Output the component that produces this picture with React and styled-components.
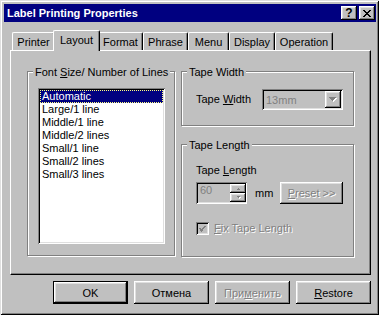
import React from 'react';
import styled, { createGlobalStyle } from 'styled-components';

const GlobalStyle = createGlobalStyle`
    html, body {
        margin: 0;
        padding: 0;
        background: #c0c0c0;
    }
    body {
        font-family: "Liberation Sans", Arial, sans-serif;
        font-size: 11px;
        color: #000;
    }
    * {
        box-sizing: border-box;
    }
`;

const raised = `
    box-shadow: inset -1px -1px #000, inset 1px 1px #fff,
        inset -2px -2px #808080, inset 2px 2px #dfdfdf;
`;

const sunken = `
    box-shadow: inset 1px 1px #808080, inset -1px -1px #fff,
        inset 2px 2px #000, inset -2px -2px #dfdfdf;
`;

const Window = styled.div`
    width: 379px;
    height: 315px;
    display: flex;
    flex-direction: column;
    padding: 4px 3px 3px 4px;
    background: #c0c0c0;
    box-shadow: inset 1px 1px #dfdfdf, inset -1px -1px #000,
        inset 2px 2px #fff, inset -2px -2px #808080;
`;

const TitleBar = styled.div`
    height: 18px;
    display: flex;
    align-items: center;
    padding: 0 1px 0 3px;
    background: #000080;
    color: #fff;
    font-weight: bold;
    font-size: 11px;
`;

const Title = styled.span`
    flex: 1;
`;

const CaptionButton = styled.div`
    width: 16px;
    height: 14px;
    margin-left: ${p => p.$gap || 0}px;
    display: flex;
    align-items: center;
    justify-content: center;
    background: #c0c0c0;
    color: #000;
    font-size: 12px;
    font-weight: bold;
    line-height: 14px;
    ${raised}
`;

const Body = styled.div`
    flex: 1;
    display: flex;
    flex-direction: column;
    padding: 8px 5px 0 6px;
`;

const TabStrip = styled.div`
    height: 20px;
    display: flex;
    align-items: flex-end;
    padding-left: 2px;
`;

const Tab = styled.div`
    position: relative;
    z-index: ${p => (p.$active ? 1 : 0)};
    flex-shrink: 0;
    width: ${p => p.$w + (p.$active ? 4 : 0)}px;
    height: ${p => (p.$active ? 21 : 18)}px;
    margin: ${p => (p.$active ? '0 -2px -1px' : '0')};
    padding-bottom: ${p => (p.$active ? 2 : 0)}px;
    display: flex;
    align-items: center;
    justify-content: center;
    background: #c0c0c0;
    border-top: 1px solid #fff;
    border-left: 1px solid #fff;
    border-right: 1px solid #000;
    border-radius: 2px 2px 0 0;
    box-shadow: inset -1px 0 #808080;
`;

const Panel = styled.div`
    height: 225px;
    display: flex;
    align-items: flex-start;
    gap: 6px;
    padding: 20px 0 0 16px;
    border-top: 1px solid #fff;
    border-left: 1px solid #fff;
    border-right: 1px solid #000;
    border-bottom: 1px solid #000;
    box-shadow: inset -1px -1px #808080;
`;

const Column = styled.div`
    display: flex;
    flex-direction: column;
    gap: 18px;
`;

const Group = styled.div`
    position: relative;
    flex-shrink: 0;
    width: ${p => p.$w}px;
    height: ${p => p.$h}px;
    padding: ${p => p.$pad};
    border: 1px solid #808080;
    box-shadow: inset 1px 1px #fff, 1px 1px #fff;
`;

const Legend = styled.span`
    position: absolute;
    top: -6px;
    left: 5px;
    padding: 0 2px;
    line-height: 13px;
    background: #c0c0c0;
    white-space: nowrap;
`;

const Key = styled.u`
    text-underline-offset: 1px;
`;

const ListBox = styled.div`
    width: 127px;
    height: 156px;
    padding: 2px;
    background: #fff;
    ${sunken}
`;

const ListItem = styled.div`
    height: 13px;
    line-height: 13px;
    padding-left: 2px;
    white-space: nowrap;
    background: ${p => (p.$selected ? '#000080' : 'transparent')};
    color: ${p => (p.$selected ? '#fff' : '#000')};
    outline: ${p => (p.$selected ? '1px dotted #ffff80' : 'none')};
    outline-offset: -1px;
`;

const Row = styled.div`
    display: flex;
    align-items: center;
    margin-top: ${p => p.$mt || 0}px;
`;

const Label = styled.span`
    width: ${p => (p.$w ? `${p.$w}px` : 'auto')};
    margin-left: ${p => p.$ml || 0}px;
    line-height: 13px;
    white-space: nowrap;
    color: ${p => (p.$disabled ? '#808080' : '#000')};
    text-shadow: ${p => (p.$disabled ? '1px 1px 0 #fff' : 'none')};
`;

const Combo = styled.div`
    width: 81px;
    height: 21px;
    display: flex;
    align-items: center;
    padding: 2px;
    background: #c0c0c0;
    ${sunken}
`;

const FieldText = styled.span`
    flex: 1;
    padding-left: 2px;
    color: #808080;
`;

const ArrowButton = styled.div`
    width: 16px;
    height: 17px;
    display: flex;
    align-items: center;
    justify-content: center;
    background: #c0c0c0;
    ${raised}
`;

const SpinEdit = styled.div`
    width: 51px;
    height: 22px;
    display: flex;
    padding: 2px 1px 2px 2px;
    background: #c0c0c0;
    ${sunken}
`;

const SpinColumn = styled.div`
    width: 16px;
    display: flex;
    flex-direction: column;
`;

const SpinButton = styled.div`
    flex: 1;
    display: flex;
    align-items: center;
    justify-content: center;
    background: #c0c0c0;
    ${raised}
`;

const PushButton = styled.div`
    width: ${p => p.$w || 75}px;
    height: ${p => p.$h || 23}px;
    margin-left: ${p => (p.$auto ? 'auto' : '0')};
    display: flex;
    align-items: center;
    justify-content: center;
    background: #c0c0c0;
    color: ${p => (p.$disabled ? '#808080' : '#000')};
    text-shadow: ${p => (p.$disabled ? '1px 1px 0 #fff' : 'none')};
    white-space: nowrap;
    box-shadow: ${p => (p.$default
        ? 'inset 0 0 0 1px #000, inset -2px -2px #000, inset 2px 2px #fff, inset -3px -3px #808080, inset 3px 3px #dfdfdf'
        : 'inset -1px -1px #000, inset 1px 1px #fff, inset -2px -2px #808080, inset 2px 2px #dfdfdf')};
`;

const CheckBox = styled.div`
    width: 13px;
    height: 13px;
    display: flex;
    align-items: center;
    justify-content: center;
    background: #c0c0c0;
    ${sunken}
`;

const ButtonRow = styled.div`
    display: flex;
    justify-content: flex-end;
    gap: 6px;
    margin-top: 6px;
`;

const tabs = [
    { name: 'Printer', w: 43 },
    { name: 'Layout', w: 43, active: true },
    { name: 'Format', w: 45 },
    { name: 'Phrase', w: 45 },
    { name: 'Menu', w: 41 },
    { name: 'Display', w: 46 },
    { name: 'Operation', w: 58 },
];

const lines = [
    'Automatic',
    'Large/1 line',
    'Middle/1 line',
    'Middle/2 lines',
    'Small/1 line',
    'Small/2 lines',
    'Small/3 lines',
];

const DownArrow = ({ w = 7, h = 4, color = '#808080' }) => (
    <svg width={w + 1} height={h + 1} shapeRendering="crispEdges">
        <polygon points={`1,1 ${w + 1},1 ${(w + 2) / 2},${h + 1}`} fill="#fff" />
        <polygon points={`0,0 ${w},0 ${w / 2},${h}`} fill={color} />
    </svg>
);

const UpArrow = () => (
    <svg width="6" height="4" shapeRendering="crispEdges">
        <polygon points="1,3 5,3 3,1" fill="#808080" />
    </svg>
);

const CloseGlyph = () => (
    <svg width="8" height="7" shapeRendering="crispEdges">
        <path d="M0.5 0 L7.5 7 M7.5 0 L0.5 7" stroke="#000" strokeWidth="1.6" />
    </svg>
);

const CheckGlyph = () => (
    <svg width="7" height="7" shapeRendering="crispEdges">
        <path d="M0.5 3 L2.5 5.5 L6.5 1" stroke="#808080" strokeWidth="1.6" fill="none" />
    </svg>
);

export default function App() {
    return (
        <>
            <GlobalStyle />
            <Window>
                <TitleBar>
                    <Title>Label Printing Properties</Title>
                    <CaptionButton>?</CaptionButton>
                    <CaptionButton $gap={2}><CloseGlyph /></CaptionButton>
                </TitleBar>
                <Body>
                    <TabStrip>
                        {tabs.map(t => (
                            <Tab key={t.name} $w={t.w} $active={t.active}>{t.name}</Tab>
                        ))}
                    </TabStrip>
                    <Panel>
                        <Group $w={148} $h={185} $pad="16px 0 0 10px">
                            <Legend>Font <Key>S</Key>ize/ Number of Lines</Legend>
                            <ListBox>
                                {lines.map((l, i) => (
                                    <ListItem key={l} $selected={i === 0}>{l}</ListItem>
                                ))}
                            </ListBox>
                        </Group>
                        <Column>
                            <Group $w={173} $h={55} $pad="17px 0 0 14px">
                                <Legend>Tape Width</Legend>
                                <Row>
                                    <Label $w={66}>Tape <Key>W</Key>idth</Label>
                                    <Combo>
                                        <FieldText>13mm</FieldText>
                                        <ArrowButton><DownArrow /></ArrowButton>
                                    </Combo>
                                </Row>
                            </Group>
                            <Group $w={173} $h={113} $pad="19px 10px 0 14px">
                                <Legend>Tape Length</Legend>
                                <Label>Tape <Key>L</Key>ength</Label>
                                <Row $mt={5}>
                                    <SpinEdit>
                                        <FieldText>60</FieldText>
                                        <SpinColumn>
                                            <SpinButton><UpArrow /></SpinButton>
                                            <SpinButton><DownArrow w={4} h={2} /></SpinButton>
                                        </SpinColumn>
                                    </SpinEdit>
                                    <Label $ml={8}>mm</Label>
                                    <PushButton $w={63} $h={22} $auto $disabled>
                                        <span><Key>P</Key>reset &gt;&gt;</span>
                                    </PushButton>
                                </Row>
                                <Row $mt={18}>
                                    <CheckBox><CheckGlyph /></CheckBox>
                                    <Label $ml={5} $disabled><Key>F</Key>ix Tape Length</Label>
                                </Row>
                            </Group>
                        </Column>
                    </Panel>
                    <ButtonRow>
                        <PushButton $default>OK</PushButton>
                        <PushButton>Отмена</PushButton>
                        <PushButton $disabled><span>При<Key>м</Key>енить</span></PushButton>
                        <PushButton><span><Key>R</Key>estore</span></PushButton>
                    </ButtonRow>
                </Body>
            </Window>
        </>
    );
}
